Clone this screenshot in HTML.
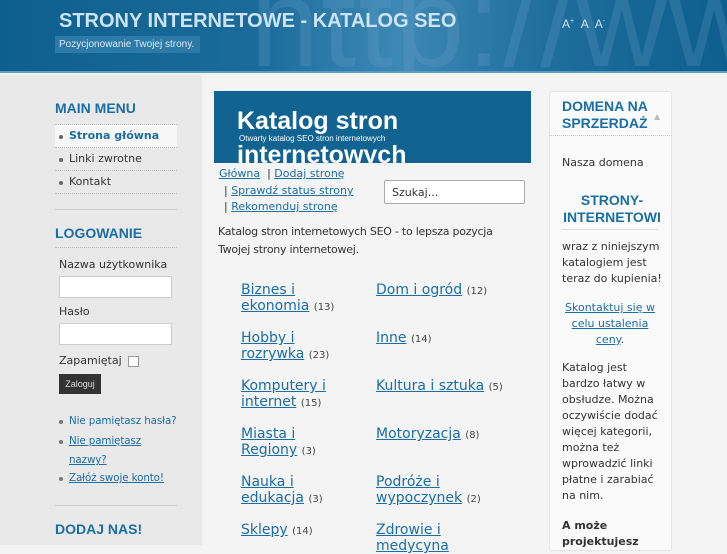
<!DOCTYPE html>
<html><head><meta charset="utf-8"><style>
*{margin:0;padding:0;box-sizing:border-box}
body{width:727px;height:545px;overflow:hidden;background:#f4f4f4;font-family:"DejaVu Sans","Liberation Sans",sans-serif;position:relative;color:#333}
.hdr{position:absolute;left:0;top:0;width:727px;height:73px;background:linear-gradient(90deg,#0e5f8e 0%,#1a6b9a 35%,#3d88b5 55%,#1f6e9c 75%,#0e5f8e 100%);border-bottom:2px solid #5a9cc4;overflow:hidden}
.http{position:absolute;left:250px;top:-48px;font:125px "Liberation Sans",sans-serif;color:rgba(120,170,210,.22);letter-spacing:2px;white-space:nowrap}
.title{position:absolute;left:59px;top:10px;font:bold 20px "Liberation Sans",sans-serif;color:#cde3f2}
.sub{position:absolute;left:55px;top:36px;background:#2b7aa8;color:#dbe9f3;font:10px "Liberation Sans",sans-serif;padding:3px 4px;width:145px}
.az{position:absolute;left:562px;top:17px;color:#cfe2ef;font:12px "Liberation Sans",sans-serif;word-spacing:4px}
.left{position:absolute;left:0;top:75px;width:202px;height:470px;background:#e9e9e9}
.mod{position:absolute;font:bold 14px "Liberation Sans",sans-serif;color:#1b6ea4}
.menu{position:absolute;left:55px;width:122px;font-size:11px}
.menu div{height:23px;line-height:22px;border-bottom:1px dotted #bbb;padding-left:14px;position:relative}
.menu div:before{content:"";position:absolute;left:4px;top:10px;width:4px;height:4px;border-radius:2px;background:#666}
.hr{position:absolute;left:55px;width:122px;border-top:1px solid #ccc}
.lbl{position:absolute;left:59px;font-size:11px;color:#333}
.inp{position:absolute;left:59px;width:113px;height:22px;background:#fff;border:1px solid #ccc}
.btn{position:absolute;left:59px;top:374px;width:42px;height:20px;background:#333;color:#ddd;font:9px "Liberation Sans",sans-serif;text-align:center;line-height:20px}
.ll{position:absolute;left:69px;font-size:10.3px;color:#1b6ea4;line-height:19px;letter-spacing:-.1px}
.ll:before{content:"";position:absolute;left:-10px;top:8px;width:4px;height:4px;border-radius:2px;background:#777}
a,.u{color:#1b6ea4;text-decoration:underline}
.ban{position:absolute;left:214px;top:91px;width:317px;height:72px;background:#116492;overflow:hidden;color:#fff}
.ban b{position:absolute;left:23px;top:16px;font:bold 25px "Liberation Sans",sans-serif}
.ban b.b2{top:50px}
.ban i{position:absolute;left:25px;top:43px;font:normal 8px "Liberation Sans",sans-serif}
.nav{position:absolute;font-size:11px;color:#333}
.srch{position:absolute;left:384px;top:180px;width:141px;height:24px;border:1px solid #aaa;border-radius:2px;background:#fff;font-size:11px;padding:5px 7px}
.txt{position:absolute;left:218px;top:223px;font-size:11px;line-height:18px;width:300px;letter-spacing:-.25px}
.cat{position:absolute;font-size:14px;line-height:16px;color:#1b6ea4}
.cat a{color:#1b6ea4}
.cat span{font-size:10px;color:#444}
.rbox{position:absolute;left:549px;top:91px;width:123px;height:460px;background:#fafafa;border:1px solid #e6e6e6;border-radius:3px}
.rt{position:absolute;left:562px;top:98px;font:bold 14px/17px "Liberation Sans",sans-serif;color:#1b6ea4}
.rp{position:absolute;left:562px;font-size:11px;line-height:16px;width:100px}
</style></head><body>
<div class="hdr"><div class="http">http://ww</div></div>
<div class="title">STRONY INTERNETOWE - KATALOG SEO</div>
<div class="sub">Pozycjonowanie Twojej strony.</div>
<div class="az">A<sup style="font-size:7px">+</sup> A A<sup style="font-size:7px">-</sup></div>
<div class="left"></div>
<div class="mod" style="left:55px;top:100px">MAIN MENU</div>
<div class="menu" style="top:124px;border-top:1px dotted #bbb">
<div style="background:#f7f7f7;color:#1b6ea4;font-weight:bold">Strona główna</div>
<div>Linki zwrotne</div><div>Kontakt</div></div>
<div class="hr" style="top:209px"></div>
<div class="mod" style="left:55px;top:225px">LOGOWANIE</div>
<div class="hr" style="top:247px;border-top:1px dotted #bbb"></div>
<div class="lbl" style="top:258px">Nazwa użytkownika</div>
<div class="inp" style="top:276px"></div>
<div class="lbl" style="top:305px">Hasło</div>
<div class="inp" style="top:323px"></div>
<div class="lbl" style="top:354px">Zapamiętaj <span style="display:inline-block;width:11px;height:11px;border:1px solid #999;vertical-align:middle;background:#fff;margin-left:3px"></span></div>
<div class="btn">Zaloguj</div>
<div class="ll" style="top:412px">Nie pamiętasz hasła?</div>
<div class="ll" style="top:432px"><span class="u">Nie pamiętasz<br>nazwy?</span></div>
<div class="ll" style="top:469px"><span class="u">Załóż swoje konto!</span></div>
<div class="hr" style="top:505px"></div>
<div class="mod" style="left:55px;top:521px">DODAJ NAS!</div>
<div class="ban"><b>Katalog stron</b><i>Otwarty katalog SEO stron internetowych</i><b class="b2">internetowych</b></div>
<div class="nav" style="left:219px;top:167px"><a>Główna</a> &nbsp;| <a>Dodaj stronę</a></div>
<div class="nav" style="left:224px;top:184px">| <a>Sprawdź status strony</a></div>
<div class="nav" style="left:224px;top:200px">| <a>Rekomenduj stronę</a></div>
<div class="srch">Szukaj...</div>
<div class="txt">Katalog stron internetowych SEO - to lepsza pozycja Twojej strony internetowej.</div>
<div class="cat" style="left:241px;top:282px"><a>Biznes i<br>ekonomia</a> <span>(13)</span></div>
<div class="cat" style="left:376px;top:282px"><a>Dom i ogród</a> <span>(12)</span></div>
<div class="cat" style="left:241px;top:330px"><a>Hobby i<br>rozrywka</a> <span>(23)</span></div>
<div class="cat" style="left:376px;top:330px"><a>Inne</a> <span>(14)</span></div>
<div class="cat" style="left:241px;top:378px"><a>Komputery i<br>internet</a> <span>(15)</span></div>
<div class="cat" style="left:376px;top:378px"><a>Kultura i sztuka</a> <span>(5)</span></div>
<div class="cat" style="left:241px;top:426px"><a>Miasta i<br>Regiony</a> <span>(3)</span></div>
<div class="cat" style="left:376px;top:426px"><a>Motoryzacja</a> <span>(8)</span></div>
<div class="cat" style="left:241px;top:474px"><a>Nauka i<br>edukacja</a> <span>(3)</span></div>
<div class="cat" style="left:376px;top:474px"><a>Podróże i<br>wypoczynek</a> <span>(2)</span></div>
<div class="cat" style="left:241px;top:522px"><a>Sklepy</a> <span>(14)</span></div>
<div class="cat" style="left:376px;top:522px"><a>Zdrowie i<br>medycyna</a></div>
<div class="rbox"></div>
<div style="position:absolute;left:549px;top:135px;width:123px;border-top:1px dotted #ccc"></div>
<div class="rt">DOMENA NA<br>SPRZERDAŻ</div>
<div style="position:absolute;left:654px;top:112px;color:#bbb;font-size:8px">▲</div>
<div class="rp" style="top:155px">Nasza domena</div>
<div class="rt" style="top:192px;left:562px;width:100px;text-align:center;overflow:hidden;white-space:nowrap">STRONY-<br>INTERNETOWI</div>
<div style="position:absolute;left:562px;top:229px;width:96px;border-top:1px solid #ddd"></div>
<div class="rp" style="top:239px">wraz z niniejszym katalogiem jest teraz do kupienia!</div>
<div class="rp" style="top:300px;text-align:center;width:96px"><a>Skontaktuj się w celu ustalenia ceny</a>.</div>
<div class="rp" style="top:360px">Katalog jest bardzo łatwy w obsłudze. Można oczywiście dodać więcej kategorii, można też wprowadzić linki płatne i zarabiać na nim.</div>
<div class="rp" style="top:518px;font-weight:bold">A może projektujesz</div>
</body></html>
